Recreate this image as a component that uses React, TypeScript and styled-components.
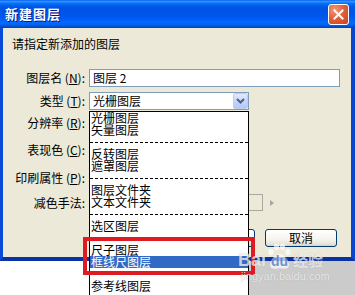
import React from "react";
import styled, { createGlobalStyle } from "styled-components";

const Global = createGlobalStyle`
  html, body { margin: 0; padding: 0; background: #fff; }
  body {
    font-family: "Noto Sans CJK SC", "Noto Sans", sans-serif;
    font-size: 12px;
    color: #000;
  }
`;

const Screen = styled.div`
  position: relative;
  width: 355px;
  height: 295px;
  overflow: hidden;
  display: flex;
  flex-direction: column;
  background: #fff;
`;

const Window = styled.div`
  height: 261px;
  display: flex;
  flex-direction: column;
  flex-shrink: 0;
`;

const TitleBar = styled.div`
  height: 28px;
  flex-shrink: 0;
  display: flex;
  align-items: center;
  justify-content: space-between;
  padding: 0 6px 0 5px;
  background: linear-gradient(
    180deg,
    #0058ee 0%,
    #3593ff 4%,
    #288eff 7%,
    #127dff 10%,
    #036ffc 13%,
    #0262ee 18%,
    #0057e5 24%,
    #0054e3 30%,
    #0055eb 56%,
    #005bf5 68%,
    #026afe 80%,
    #0062ef 88%,
    #0052d6 94%,
    #0040ab 100%
  );
`;

const Title = styled.div`
  color: #fff;
  font-weight: 700;
  font-size: 13px;
  letter-spacing: 1px;
  line-height: 16px;
  text-shadow: 1px 1px 0 #0a1883;
`;

const CloseButton = styled.div`
  width: 21px;
  height: 21px;
  box-sizing: border-box;
  border: 1px solid #fff;
  border-radius: 3px;
  background: radial-gradient(circle at 30% 25%, #f09a7c 0%, #e0613c 45%, #c8431f 100%);
  display: flex;
  align-items: center;
  justify-content: center;
`;

const Client = styled.div`
  flex: 1;
  display: flex;
  flex-direction: column;
  background: #ece9d8;
  border-left: 3px solid #0a4ad8;
  border-right: 4px solid #0a44cf;
  border-bottom: 4px solid #0832a6;
`;

const Prompt = styled.div`
  margin: 9px 0 0 9px;
  line-height: 14px;
  height: 14px;
  white-space: nowrap;
`;

const Form = styled.div`
  display: flex;
  flex-direction: column;
  padding-right: 11px;
  margin-top: 18px;
`;

const Field = styled.div<{ $h: number; $mt: number }>`
  display: grid;
  grid-template-columns: 83px 1fr;
  column-gap: 3px;
  align-items: center;
  height: ${(p) => p.$h}px;
  margin-top: ${(p) => p.$mt}px;
`;

const Label = styled.div`
  text-align: right;
  padding-right: 1px;
  line-height: 14px;
  white-space: nowrap;
`;

const U = styled.span`
  text-decoration: underline;
`;

const TextInput = styled.div`
  height: 18px;
  box-sizing: border-box;
  border: 1px solid #7f9db9;
  background: #fff;
  padding-left: 3px;
  line-height: 16px;
`;

const Combo = styled.div`
  width: 160px;
  height: 18px;
  box-sizing: border-box;
  border: 1px solid #7f9db9;
  background: #fff;
  display: flex;
  align-items: stretch;
  padding: 0 0 0 3px;
`;

const ComboText = styled.div`
  flex: 1;
  line-height: 16px;
`;

const ArrowButton = styled.div`
  width: 15px;
  box-sizing: border-box;
  border: 1px solid #bccdf4;
  border-radius: 2px;
  background: linear-gradient(180deg, #e1eafe 0%, #c7d7fb 50%, #b4c8f5 100%);
  display: flex;
  align-items: center;
  justify-content: center;
`;

const DisabledBox = styled.div`
  width: 174px;
  height: 17px;
  box-sizing: border-box;
  border: 1px solid #a8a8a0;
  background: #ece9d8;
`;

const ControlLine = styled.div`
  display: flex;
  align-items: center;
  gap: 7px;
`;

const GrayArrow = styled.div`
  width: 0;
  height: 0;
  border-top: 3px solid transparent;
  border-bottom: 3px solid transparent;
  border-left: 4px solid #a6a6a6;
`;

const ButtonRow = styled.div`
  display: flex;
  justify-content: flex-end;
  gap: 10px;
  margin-top: 18px;
  padding-right: 14px;
`;

const Button = styled.div`
  width: 72px;
  height: 18px;
  box-sizing: border-box;
  border: 1px solid #003c74;
  border-radius: 3px;
  background: linear-gradient(180deg, #ffffff 0%, #f6f5f1 55%, #e6e3d8 88%, #d6d0c5 100%);
  text-align: center;
  line-height: 16px;
`;

const Below = styled.div`
  flex: 1;
  display: flex;
`;

const BelowLeft = styled.div`
  width: 89px;
  background: #fff;
`;

const BelowRight = styled.div`
  flex: 1;
  background: #cbcbcb;
`;

const DropList = styled.div`
  position: absolute;
  left: 89px;
  top: 111px;
  width: 160px;
  height: 200px;
  box-sizing: border-box;
  border: 1px solid #000;
  background: #fff;
  display: flex;
  flex-direction: column;
  padding-top: 0;
`;

const Item = styled.div<{ $selected?: boolean }>`
  height: 12px;
  line-height: 12px;
  padding-left: 1px;
  white-space: nowrap;
  background: ${(p) => (p.$selected ? "#316ac5" : "transparent")};
  color: ${(p) => (p.$selected ? "#fff" : "#000")};
`;

const Separator = styled.div<{ $blank?: boolean }>`
  height: 12px;
  display: flex;
  align-items: center;
  &::before {
    content: "";
    flex: 1;
    height: 1px;
    background: ${(p) =>
      p.$blank ? "transparent" : "repeating-linear-gradient(90deg, #000 0 3px, transparent 3px 5px)"};
  }
`;

const Highlight = styled.div`
  position: absolute;
  left: 83px;
  top: 237px;
  width: 172px;
  height: 38px;
  box-sizing: border-box;
  border: 4px solid #de1a22;
`;

const Watermark = styled.div`
  position: absolute;
  left: 238px;
  top: 243px;
  display: flex;
  flex-direction: column;
  align-items: flex-start;
  pointer-events: none;
`;

const MarkLine = styled.div`
  display: flex;
  align-items: flex-end;
  font-family: "Liberation Sans", Arial, sans-serif;
  color: rgba(255, 255, 255, 0.7);
  text-shadow: 0 0 1px rgba(90, 90, 90, 0.3);
`;

const MarkBai = styled.span`
  font-size: 18px;
  font-weight: 700;
  line-height: 20px;
`;

const Paw = styled.span`
  position: relative;
  width: 25px;
  height: 27px;
  display: inline-flex;
  align-items: flex-end;
  justify-content: center;
  margin: 0 1px;
`;

const PawText = styled.span`
  position: relative;
  font-size: 14px;
  font-weight: 700;
  line-height: 17px;
  color: rgba(80, 120, 200, 0.8);
  text-shadow: none;
`;

const PawSvg = styled.svg`
  position: absolute;
  left: 0;
  top: 0;
`;

const MarkJy = styled.span`
  font-family: "Noto Sans CJK SC", sans-serif;
  font-size: 15px;
  font-weight: 700;
  line-height: 20px;
`;

const MarkUrl = styled.div`
  font-family: "Liberation Sans", Arial, sans-serif;
  font-size: 11px;
  line-height: 12px;
  margin-left: 3px;
  color: rgba(255, 255, 255, 0.7);
  text-shadow: 0 0 1px rgba(90, 90, 90, 0.3);
`;

const layerTypes: Array<{ kind: "item" | "sep" | "blank"; text?: string; selected?: boolean }> = [
  { kind: "item", text: "光栅图层" },
  { kind: "item", text: "矢量图层" },
  { kind: "sep" },
  { kind: "item", text: "反转图层" },
  { kind: "item", text: "遮罩图层" },
  { kind: "sep" },
  { kind: "item", text: "图层文件夹" },
  { kind: "item", text: "文本文件夹" },
  { kind: "sep" },
  { kind: "item", text: "选区图层" },
  { kind: "blank" },
  { kind: "item", text: "尺子图层" },
  { kind: "item", text: "框线尺图层", selected: true },
  { kind: "blank" },
  { kind: "item", text: "参考线图层" },
];

export default function App() {
  return (
    <Screen>
      <Global />
      <Window>
        <TitleBar>
          <Title>新建图层</Title>
          <CloseButton>
            <svg width="11" height="11" viewBox="0 0 11 11">
              <path d="M1.5 1.5 L9.5 9.5 M9.5 1.5 L1.5 9.5" stroke="#fff" strokeWidth="2" strokeLinecap="square" />
            </svg>
          </CloseButton>
        </TitleBar>
        <Client>
          <Prompt>请指定新添加的图层</Prompt>
          <Form>
            <Field $h={18} $mt={0}>
              <Label>
                图层名 (<U>N</U>):
              </Label>
              <TextInput>图层 2</TextInput>
            </Field>
            <Field $h={18} $mt={5}>
              <Label>
                类型 (<U>T</U>):
              </Label>
              <Combo>
                <ComboText>光栅图层</ComboText>
                <ArrowButton>
                  <svg width="9" height="6" viewBox="0 0 9 6">
                    <path d="M1 1 L4.5 4.5 L8 1" stroke="#4d6185" strokeWidth="2" fill="none" />
                  </svg>
                </ArrowButton>
              </Combo>
            </Field>
            <Field $h={18} $mt={4}>
              <Label>
                分辨率 (<U>R</U>):
              </Label>
              <div />
            </Field>
            <Field $h={18} $mt={9}>
              <Label>
                表现色 (<U>C</U>):
              </Label>
              <div />
            </Field>
            <Field $h={18} $mt={10}>
              <Label>
                印刷属性 (<U>P</U>):
              </Label>
              <div />
            </Field>
            <Field $h={17} $mt={7}>
              <Label>减色手法:</Label>
              <ControlLine>
                <DisabledBox />
                <GrayArrow />
              </ControlLine>
            </Field>
          </Form>
          <ButtonRow>
            <Button>确定</Button>
            <Button>取消</Button>
          </ButtonRow>
        </Client>
      </Window>
      <Below>
        <BelowLeft />
        <BelowRight />
      </Below>

      <DropList>
        {layerTypes.map((t, i) =>
          t.kind === "item" ? (
            <Item key={i} $selected={t.selected}>
              {t.text}
            </Item>
          ) : (
            <Separator key={i} $blank={t.kind === "blank"} />
          )
        )}
      </DropList>

      <Highlight />

      <Watermark>
        <MarkLine>
          <MarkBai>Bai</MarkBai>
          <Paw>
            <PawSvg width="25" height="27" viewBox="0 0 25 27">
              <g fill="rgba(255,255,255,0.68)">
                <ellipse cx="4" cy="9" rx="2.6" ry="3.2" />
                <ellipse cx="9.5" cy="3.8" rx="2.6" ry="3.2" />
                <ellipse cx="15.5" cy="3.8" rx="2.6" ry="3.2" />
                <ellipse cx="21" cy="9" rx="2.6" ry="3.2" />
                <path d="M12.5 11 C8 11 3 18 3 22 C3 26 8 26.5 12.5 25 C17 26.5 22 26 22 22 C22 18 17 11 12.5 11 Z" />
              </g>
            </PawSvg>
            <PawText>du</PawText>
          </Paw>
          <MarkJy>经验</MarkJy>
        </MarkLine>
        <MarkUrl>jingyan.baidu.com</MarkUrl>
      </Watermark>
    </Screen>
  );
}
